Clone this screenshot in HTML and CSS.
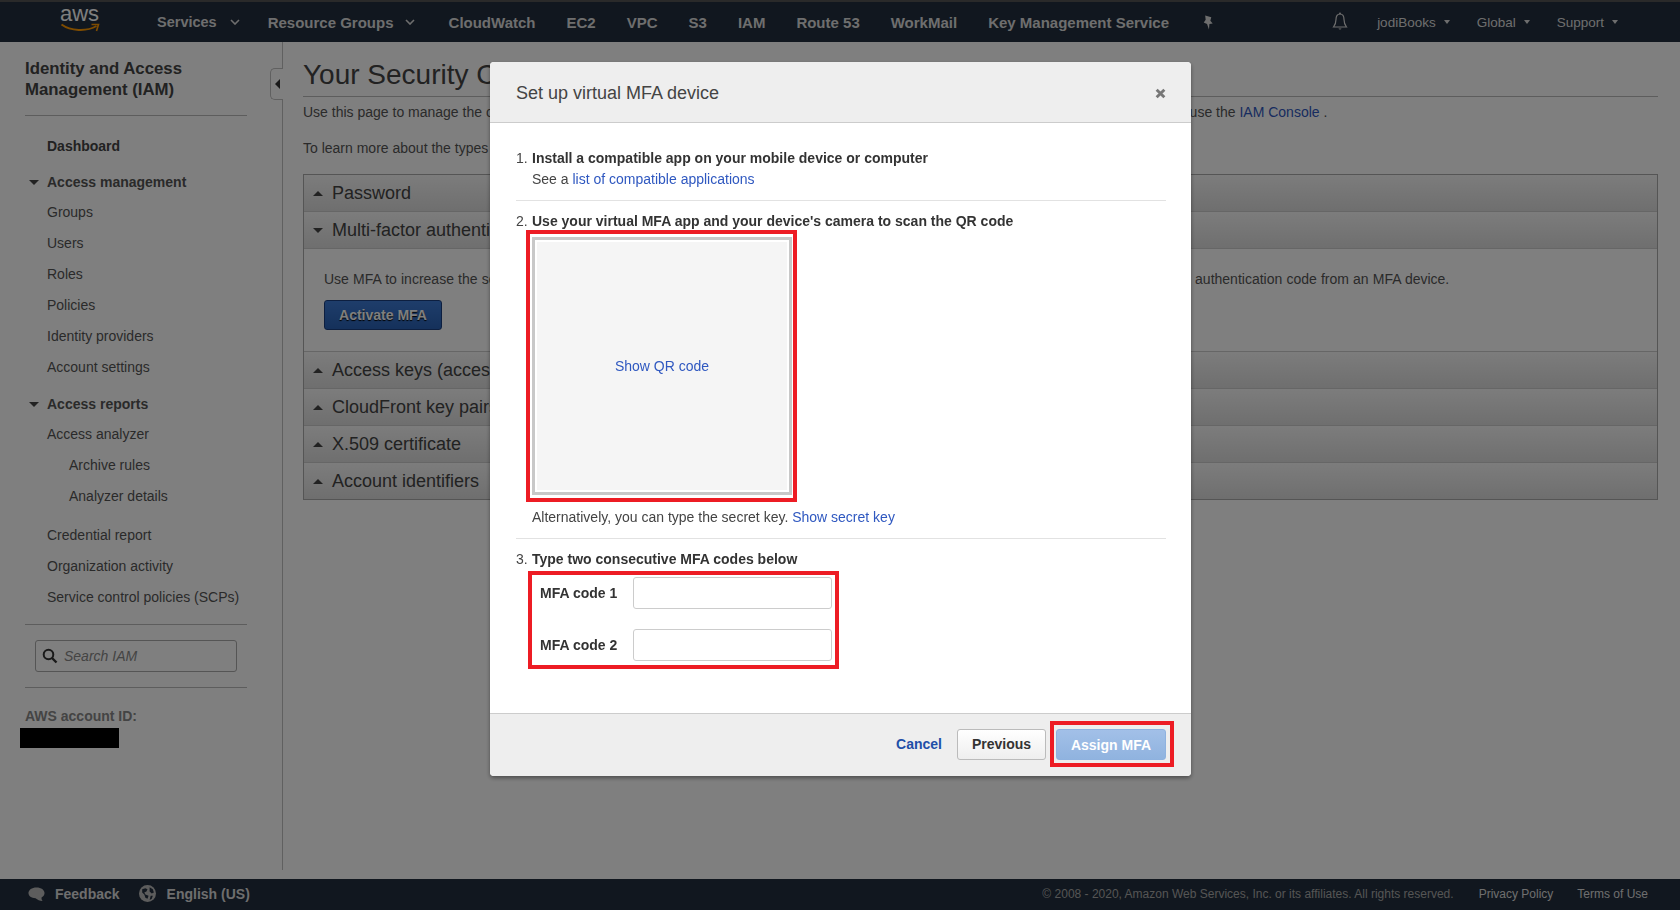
FILE: index.html
```html
<!DOCTYPE html>
<html>
<head>
<title>IAM Management Console</title>
<meta charset="utf-8">
<link rel="stylesheet" href="styles.css">
</head>
<body>
	<header class="topbar">
		<div class="logo">
			<span class="logo-text">aws</span>
			<svg class="logo-smile" viewBox="0 0 40 10"><path d="M1 1.500C10 8 26 9 36 3" fill="none" stroke="#f90" stroke-width="2"/><path d="M31 1.500L38 1.500L36 8" fill="none" stroke="#f90" stroke-width="1.600"/></svg>
		</div>
		<nav class="topnav">
			<a class="menu-link menu-first">Services <svg class="chev" viewBox="0 0 10 6"><path d="M1 1l4 4 4-4" fill="none" stroke="currentColor" stroke-width="1.600"/></svg></a>
			<a class="menu-link menu-last">Resource Groups <svg class="chev" viewBox="0 0 10 6"><path d="M1 1l4 4 4-4" fill="none" stroke="currentColor" stroke-width="1.600"/></svg></a>
			<a>CloudWatch</a>
			<a>EC2</a>
			<a>VPC</a>
			<a>S3</a>
			<a>IAM</a>
			<a>Route 53</a>
			<a>WorkMail</a>
			<a>Key Management Service</a>
			<svg class="pin" viewBox="0 0 12 16"><path d="M3 0.500L9.500 2.500 8.500 6 11 9 7.500 9.500 7 15.500 5 9.500 1.500 8 3.500 5z" fill="currentColor"/></svg>
		</nav>
		<div class="topright">
			<svg class="bell" viewBox="0 0 16 20"><path d="M8 2C5 2 4 4.500 4 7.500C4 11 3 13 1.500 15H14.500C13 13 12 11 12 7.500C12 4.500 11 2 8 2Z" fill="none" stroke="currentColor" stroke-width="1.200"/><path d="M6.500 16.500a1.600 1.600 0 0 0 3 0z" fill="currentColor"/><circle cx="8" cy="1.500" r="1" fill="currentColor"/></svg>
			<a>jodiBooks <i class="caret-sm"></i></a>
			<a>Global <i class="caret-sm"></i></a>
			<a>Support <i class="caret-sm"></i></a>
		</div>
	</header>

	<div class="page">
		<aside class="sidebar">
			<h2 class="side-title">Identity and Access Management (IAM)</h2>
			<ul class="side-nav">
				<li class="side-head side-dash">Dashboard</li>
				<li class="side-head side-group"><i class="caret-down"></i>Access management</li>
				<li class="side-item side-first">Groups</li>
				<li class="side-item">Users</li>
				<li class="side-item">Roles</li>
				<li class="side-item">Policies</li>
				<li class="side-item">Identity providers</li>
				<li class="side-item">Account settings</li>
				<li class="side-head side-group side-group-2"><i class="caret-down"></i>Access reports</li>
				<li class="side-item side-first">Access analyzer</li>
				<li class="side-item side-sub">Archive rules</li>
				<li class="side-item side-sub">Analyzer details</li>
				<li class="side-item side-gap">Credential report</li>
				<li class="side-item">Organization activity</li>
				<li class="side-item">Service control policies (SCPs)</li>
			</ul>
			<div class="side-search">
				<div class="search-box">
					<svg class="search-icon" viewBox="0 0 16 16"><circle cx="6.500" cy="6.500" r="4.800" fill="none" stroke="currentColor" stroke-width="2"/><path d="M10 10l4.500 4.500" stroke="currentColor" stroke-width="2.400"/></svg>
					<span>Search IAM</span>
				</div>
			</div>
			<div class="account-label">AWS account ID:</div>
			<div class="account-mask"></div>
			<div class="side-toggle"><i class="caret-left"></i></div>
		</aside>

		<main class="main">
			<h1 class="main-title">Your Security Credentials</h1>
			<p class="intro">Use this page to manage the credentials for your AWS account. To manage credentials for AWS Identity and Access Management (IAM) users, use the <a class="link">IAM Console</a> .</p>
			<p class="intro">To learn more about the types of AWS credentials and how they're used, see AWS Security Credentials in AWS General Reference.</p>
			<div class="accordion">
				<div class="acc-head"><i class="caret-up"></i>Password</div>
				<div class="acc-head"><i class="caret-down"></i>Multi-factor authentication (MFA)</div>
				<div class="acc-body">
					<p class="acc-text">Use MFA to increase the security of your AWS environment. Signing in to MFA-protected accounts requires a user name, password, and an authentication code from an MFA device.</p>
					<button class="btn-activate">Activate MFA</button>
				</div>
				<div class="acc-head"><i class="caret-up"></i>Access keys (access key ID and secret access key)</div>
				<div class="acc-head"><i class="caret-up"></i>CloudFront key pairs</div>
				<div class="acc-head"><i class="caret-up"></i>X.509 certificate</div>
				<div class="acc-head"><i class="caret-up"></i>Account identifiers</div>
			</div>
		</main>
	</div>

	<footer class="footer">
		<svg class="foot-icon" viewBox="0 0 18 16"><path d="M9 1C4 1 0.500 3.500 0.500 7C0.500 10 3.500 12.500 8 12.500C10 14 12.500 15.500 15.500 15.500C14.500 14.500 14 13 14.500 11.500C16.500 10.500 17.500 9 17.500 7C17.500 3.500 14 1 9 1Z" fill="currentColor"/></svg>
		<a class="foot-strong">Feedback</a>
		<svg class="foot-icon foot-globe" viewBox="0 0 16 16"><circle cx="8" cy="8" r="8" fill="currentColor"/><path d="M3 4l3-1 2 1-1 2-2 1 1 2 3 1-1 3-2-1-1-3-2-2zM10 2l3 2 1 3-2 1-2-2zM11 10l2 0-1 3-2 1z" fill="#232f3e"/></svg>
		<a class="foot-strong">English (US)</a>
		<div class="foot-right">
			<span class="copyright">© 2008 - 2020, Amazon Web Services, Inc. or its affiliates. All rights reserved.</span>
			<a>Privacy Policy</a>
			<a>Terms of Use</a>
		</div>
	</footer>

	<!-- modal layer -->
	<div class="overlay">
		<div class="modal">
			<div class="modal-head">
				<span>Set up virtual MFA device</span>
				<svg class="modal-close" viewBox="0 0 10 10"><path d="M1.500 1.500l7 7M8.500 1.500l-7 7" stroke="currentColor" stroke-width="2.600"/></svg>
			</div>
			<div class="modal-body">
				<section class="step step-1">
					<div class="step-title"><span class="num">1.</span><b>Install a compatible app on your mobile device or computer</b></div>
					<div class="step-sub">See a <a class="link">list of compatible applications</a></div>
				</section>
				<section class="step step-2">
					<div class="step-title"><span class="num">2.</span><b>Use your virtual MFA app and your device's camera to scan the QR code</b></div>
					<div class="red-box qr-wrap">
						<div class="qr-box">
							<div class="qr-fill"><a class="link">Show QR code</a></div>
						</div>
					</div>
					<div class="step-sub secret">Alternatively, you can type the secret key. <a class="link">Show secret key</a></div>
				</section>
				<section class="step step-3">
					<div class="step-title"><span class="num">3.</span><b>Type two consecutive MFA codes below</b></div>
					<div class="red-box codes">
						<label class="code-row"><b>MFA code 1</b><input class="code-input" type="text"></label>
						<label class="code-row"><b>MFA code 2</b><input class="code-input" type="text"></label>
					</div>
				</section>
			</div>
			<div class="modal-foot">
				<a class="link btn-cancel">Cancel</a>
				<button class="btn-prev">Previous</button>
				<div class="red-box assign-wrap"><button class="btn-assign">Assign MFA</button></div>
			</div>
		</div>
	</div>
</body>
</html>
```

FILE: styles.css
```css
* { box-sizing: border-box; }

html, body { height: 100%; }

body {
	margin: 0;
	display: flex;
	flex-direction: column;
	overflow: hidden;
	background: #fff;
	color: #444;
	font-family: "Liberation Sans", Arial, sans-serif;
	font-size: 14px;
}

ul { list-style: none; margin: 0; padding: 0; }
p { margin: 0; }

.link { color: #2f58c0; }

/* top bar */
.topbar {
	flex: 0 0 42px;
	display: flex;
	align-items: center;
	background: #232f3e;
	border-top: 2px solid #555;
	color: #ddd;
	white-space: nowrap;
}

.logo {
	position: relative;
	width: 157px;
	height: 40px;
	flex: none;
}

.logo-text {
	display: block;
	padding-left: 60px;
	font-size: 22px;
	line-height: 24px;
	color: #fff;
}

.logo-smile {
	position: absolute;
	left: 60px;
	top: 21px;
	width: 41px;
	height: 10px;
}

.topnav {
	display: flex;
	align-items: center;
	gap: 30px;
	font-size: 15px;
	font-weight: bold;
}

.menu-link { display: flex; align-items: center; gap: 11px; }
.menu-first { font-size: 14.500px; }
.menu-first .chev { margin: 0 -2px 0 2px; }
.menu-last { margin-right: 3px; }
.menu-last ~ a { margin-left: 1px; }
.chev { width: 10px; height: 6px; }
.pin { width: 12px; height: 15px; margin-left: 3px; }

.topright {
	display: flex;
	align-items: center;
	gap: 27px;
	margin-left: auto;
	padding-right: 62px;
	font-size: 13.500px;
}

.topright a { display: flex; align-items: center; gap: 8px; }
.bell { width: 16px; height: 20px; margin-right: 2px; }

.caret-sm {
	border-left: 3.500px solid transparent;
	border-right: 3.500px solid transparent;
	border-top: 4px solid currentColor;
}

/* sidebar + main */
.page {
	flex: 1;
	display: flex;
	min-height: 0;
}

.sidebar {
	position: relative;
	flex: 0 0 283px;
	margin-bottom: 9px;
	padding: 16px 35px 0 25px;
	border-right: 1px solid #c0c0c0;
}

.side-title {
	margin: 0;
	padding-bottom: 15px;
	border-bottom: 1px solid #bbb;
	color: #444;
	font-size: 16.800px;
	line-height: 21px;
}

.side-nav { margin-top: 15px; margin-left: 22px; }
.side-head { position: relative; line-height: 31px; font-weight: bold; }
.side-group { margin-top: 5px; color: #555; }
.side-group-2 { margin-top: 6px; }
.side-item { line-height: 31px; white-space: nowrap; color: #555; }
.side-first { margin-top: -1px; }
.side-sub { padding-left: 22px; }
.side-gap { margin-top: 8px; }

.side-group .caret-down {
	position: absolute;
	left: -18px;
	top: 13px;
}

.caret-down, .caret-up {
	display: inline-block;
	border-left: 5px solid transparent;
	border-right: 5px solid transparent;
}

.caret-down { border-top: 5px solid #444; }
.caret-up { border-bottom: 5px solid #444; }

.side-search {
	margin-top: 11px;
	padding: 15px 10px 15px;
	border-top: 1px solid #bbb;
	border-bottom: 1px solid #bbb;
}

.search-box {
	display: flex;
	align-items: center;
	gap: 6px;
	height: 32px;
	padding-left: 6px;
	border: 1px solid #aaa;
	border-radius: 3px;
	background: #fff;
	color: #888;
	font-style: italic;
}

.search-icon { width: 16px; height: 16px; color: #333; }

.account-label {
	margin-top: 19px;
	color: #888;
	font-weight: bold;
	line-height: 18px;
}

.account-mask {
	width: 99px;
	height: 20px;
	margin: 3px 0 0 -5px;
	background: #000;
}

.side-toggle {
	position: absolute;
	right: -1px;
	top: 26px;
	display: flex;
	align-items: center;
	justify-content: center;
	width: 13px;
	height: 32px;
	border: 1px solid #c0c0c0;
	border-right: 0;
	border-radius: 5px 0 0 5px;
	background: #fff;
}

.caret-left {
	border-top: 5px solid transparent;
	border-bottom: 5px solid transparent;
	border-right: 5px solid #333;
}

.main {
	flex: 1;
	min-width: 0;
	padding: 16px 22px 0 20px;
	white-space: nowrap;
	overflow: hidden;
}

.main-title {
	margin: 0;
	padding-bottom: 4px;
	border-bottom: 1px solid #bbb;
	color: #444;
	font-size: 28px;
	font-weight: normal;
	line-height: 34px;
}

.intro { margin-top: 6px; line-height: 18px; color: #555; }
.intro + .intro { margin-top: 18px; }

.accordion {
	margin-top: 17px;
	border: 1px solid #aaa;
}

.acc-head {
	display: flex;
	align-items: center;
	gap: 9px;
	height: 37px;
	padding-left: 9px;
	border-bottom: 1px solid #ccc;
	background: linear-gradient(#f9f9f9, #dedede);
	color: #444;
	font-size: 18px;
}

.acc-head:last-child { height: 36px; border-bottom: 0; }

.acc-body {
	height: 103px;
	padding: 21px 20px 0;
	border-bottom: 1px solid #ccc;
}

.acc-text { line-height: 18px; color: #555; word-spacing: 0.250px; }

.btn-activate {
	display: block;
	width: 118px;
	height: 30px;
	margin-top: 12px;
	border: 1px solid #1a3f80;
	border-radius: 3px;
	background: linear-gradient(#3d7bd6, #2a62b6);
	color: #fff;
	font: bold 14px "Liberation Sans", Arial, sans-serif;
	text-shadow: 0 1px 1px #000;
}

/* footer */
.footer {
	flex: 0 0 31px;
	display: flex;
	align-items: center;
	padding: 0 32px 2px 28px;
	background: #232f3e;
	color: #ddd;
	white-space: nowrap;
}

.foot-icon { width: 17px; height: 16px; color: #bbb; flex: none; }
.foot-globe { height: 17px; margin: 0 1px 0 19px; }
.foot-strong { margin-left: 10px; font-weight: bold; }

.foot-right {
	display: flex;
	align-items: center;
	gap: 24px;
	margin-left: auto;
	font-size: 12px;
}

.copyright { margin-right: 1px; color: #aaa; }

/* modal */
.overlay {
	position: fixed;
	top: 0;
	left: 0;
	right: 0;
	bottom: 0;
	display: flex;
	justify-content: center;
	align-items: flex-start;
	padding: 62px 0 0 1px;
	background: rgba(0, 0, 0, 0.5);
}

.modal {
	width: 701px;
	height: 714px;
	display: flex;
	flex-direction: column;
	border-radius: 4px;
	background: #fff;
	box-shadow: 0 2px 4px rgba(0, 0, 0, 0.4);
	overflow: hidden;
}

.modal-head {
	flex: 0 0 61px;
	display: flex;
	align-items: center;
	justify-content: space-between;
	padding: 2px 25px 0 26px;
	border-bottom: 1px solid #ccc;
	background: #eee;
	color: #444;
	font-size: 18px;
}

.modal-close { width: 11px; height: 11px; color: #777; }

.modal-body {
	flex: 1;
	padding: 0 25px 0 26px;
	color: #444;
}

.step { border-bottom: 1px solid #e2e2e2; }
.step:last-child { border-bottom: 0; }
.step-1 { height: 78px; padding-top: 26px; }
.step-2 { height: 338px; padding-top: 11px; }
.step-3 { padding-top: 11px; }

.step-title {
	display: flex;
	gap: 6px;
	line-height: 18px;
}

.step-title b { color: #333; }
.num { width: 10px; }

.step-sub {
	margin-top: 3px;
	padding-left: 16px;
	line-height: 18px;
}

.red-box { border: 4px solid #ed1c24; }

.qr-wrap {
	width: 271px;
	height: 272px;
	margin: 0 0 0 10px;
	padding: 3px 1px 3px 2px;
}

.qr-box {
	height: 100%;
	padding: 2px;
	border: 3px solid #c8c8c8;
	background: #fff;
}

.qr-fill {
	display: flex;
	align-items: center;
	justify-content: center;
	height: 100%;
	background: #f5f5f5;
}

.secret { margin-top: 6px; }

.codes {
	width: 311px;
	height: 98px;
	margin: 3px 0 0 12px;
	padding: 2px 3px 0 8px;
}

.code-row {
	display: flex;
	align-items: center;
	justify-content: space-between;
	height: 32px;
	margin-bottom: 20px;
	color: #333;
}

.code-input {
	width: 199px;
	height: 32px;
	border: 1px solid #ccc;
	border-radius: 3px;
	background: #fff;
}

.modal-foot {
	flex: 0 0 63px;
	display: flex;
	align-items: center;
	justify-content: flex-end;
	padding: 0 17px 2px 0;
	border-top: 1px solid #ccc;
	background: #eee;
	font-weight: bold;
}

.btn-cancel { margin-right: 15px; color: #1f4fa8; }

.btn-prev, .btn-assign {
	height: 31px;
	border-radius: 3px;
	font: bold 14px "Liberation Sans", Arial, sans-serif;
}

.btn-prev {
	width: 89px;
	margin-right: 4px;
	border: 1px solid #bbb;
	background: linear-gradient(#fff, #eee);
	color: #333;
}

.assign-wrap {
	width: 124px;
	height: 46px;
	padding: 4px 2px;
}

.btn-assign {
	width: 110px;
	border: 1px solid #8fb2df;
	background: linear-gradient(#a2c0e8, #90b3df);
	color: #fff;
}
```
